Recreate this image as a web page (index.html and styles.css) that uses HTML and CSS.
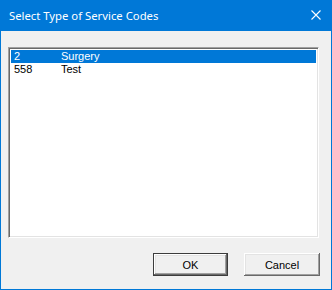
FILE: index.html
```html
<!DOCTYPE html>
<html lang="en">
<head>
  <meta charset="UTF-8" />
  <title>Select Type of Service Codes</title>
  <link rel="stylesheet" href="styles.css">
</head>
<body>

<div class="window">
  <div class="titlebar">
    <span class="title">Select Type of Service Codes</span>
    <svg class="close" width="10" height="10" viewBox="0 0 10 10">
      <path d="M0.5 0.5 L9.5 9.5 M9.5 0.5 L0.5 9.5" stroke="#fff" stroke-width="1.1" fill="none"/>
    </svg>
  </div>

  <div class="content">
    <div class="listbox">
      <div class="row selected"><span class="code">2</span><span>Surgery</span></div>
      <div class="row"><span class="code">558</span><span>Test</span></div>
    </div>

    <div class="buttons">
      <button class="btn default">OK</button>
      <button class="btn">Cancel</button>
    </div>
  </div>
</div>

</body>
</html>
```

FILE: styles.css
```css
body {
  margin: 0;
  background: #f0f0f0;
}
.window {
  width: 332px;
  height: 290px;
  box-sizing: border-box;
  border: 1px solid #0078d7;
  border-top: none;
  background: #f0f0f0;
  display: flex;
  flex-direction: column;
}
.titlebar {
  height: 31px;
  margin: 0 -1px;
  background: #0078d7;
  color: white;
  display: flex;
  align-items: center;
  justify-content: space-between;
  padding: 0 11px 0 9px;
  font-family: "Noto Sans", "Open Sans", sans-serif;
  font-size: 11.3px;
}
.title {
  margin-top: -1px;
}
.close {
  margin-top: -1px;
}
.content {
  flex: 1;
  padding: 16px 12px 0 7px;
  display: flex;
  flex-direction: column;
}
.listbox {
  height: 191px;
  box-sizing: border-box;
  background: white;
  border-top: 1px solid #a0a0a0;
  border-left: 1px solid #a0a0a0;
  border-right: 1px solid #ffffff;
  border-bottom: 1px solid #ffffff;
  box-shadow: inset 1px 1px 0 #696969, inset -1px -1px 0 #e3e3e3;
  padding: 2px 2px;
  font-family: "Liberation Sans", Arial, sans-serif;
  font-size: 11px;
}
.row {
  height: 13px;
  line-height: 13px;
  padding-left: 3px;
  display: flex;
  color: #000;
}
.row.selected {
  background: #0078d7;
  color: white;
}
.code {
  width: 47px;
}
.buttons {
  display: flex;
  justify-content: flex-end;
  gap: 16px;
  margin-top: 15px;
  margin-right: -1px;
}
.btn {
  width: 76px;
  height: 23px;
  background: #f0f0f0;
  font-family: "Liberation Sans", Arial, sans-serif;
  font-size: 11px;
  color: #000;
  border: none;
  border-radius: 0;
  padding: 0;
  box-shadow: inset -1px -1px 0 #696969, inset 1px 1px 0 #ffffff, inset -2px -2px 0 #a0a0a0, inset 2px 2px 0 #e3e3e3;
}
.btn.default {
  width: 75px;
  box-shadow: inset 0 0 0 1px #3c3c3c, inset -2px -2px 0 #696969, inset 2px 2px 0 #ffffff, inset -3px -3px 0 #a0a0a0, inset 3px 3px 0 #e3e3e3;
}
```
